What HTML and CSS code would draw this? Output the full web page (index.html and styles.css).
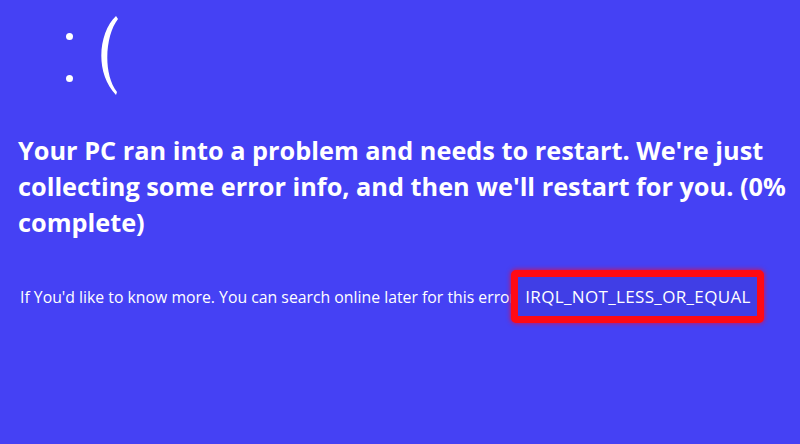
FILE: index.html
```html
<!DOCTYPE html>
<html lang="en">
<head>
<meta charset="utf-8">
<title>Your PC ran into a problem</title>
<link rel="stylesheet" href="styles.css">
</head>
<body>
<main class="screen">
  <div class="face" aria-label=":(">
    <span class="colon"><i class="dot"></i><i class="dot"></i></span>
    <svg class="paren" width="22" height="80" viewBox="0 0 22 80" aria-hidden="true">
      <path d="M19 0 C 2 16, -3 56, 19 79 L 20 76 C 5 56, 9 18, 21 3 Z" fill="#fff"/>
    </svg>
  </div>
  <p class="headline">Your PC ran into a problem and needs to restart. We're just<br>collecting some error info, and then we'll restart for you. (0%<br>complete)</p>
  <div class="info">
    <span class="more">If You'd like to know more. You can search online later for this error:</span>
    <span class="code">IRQL_NOT_LESS_OR_EQUAL</span>
  </div>
</main>
</body>
</html>
```
FILE: styles.css
```css
html, body {
  margin: 0;
  padding: 0;
  background: #4541f4;
}
.screen {
  width: 800px;
  height: 444px;
  overflow: hidden;
  background: #4541f4;
  color: #fff;
  font-family: "Open Sans", "Noto Sans", sans-serif;
  display: flex;
  flex-direction: column;
}
.face {
  display: flex;
  align-items: flex-start;
  margin: 16px 0 0 66px;
  height: 80px;
}
.colon {
  display: flex;
  flex-direction: column;
  gap: 35px;
  margin-top: 17px;
}
.dot {
  display: block;
  width: 7px;
  height: 7px;
  border-radius: 50%;
  background: #fff;
}
.paren {
  display: block;
  margin-left: 24px;
}
.headline {
  margin: 36px 0 0 18px;
  font-size: 25.3px;
  line-height: 36px;
  font-weight: 700;
  white-space: nowrap;
}
.info {
  display: flex;
  align-items: center;
  margin: 30px 0 0 20px;
}
.more {
  font-size: 15.8px;
  white-space: nowrap;
}
.code {
  position: relative;
  margin-left: -9px;
  width: 253px;
  height: 53px;
  flex: none;
  box-sizing: border-box;
  border: 7px solid #ff0a14;
  border-radius: 5px;
  background: #403ee6;
  box-shadow: 0 0 4px 1px rgba(255, 0, 40, 0.6);
  font-size: 17px;
  font-weight: 400;
  display: flex;
  align-items: center;
  padding-left: 7px;
  letter-spacing: 0.35px;
}
```
